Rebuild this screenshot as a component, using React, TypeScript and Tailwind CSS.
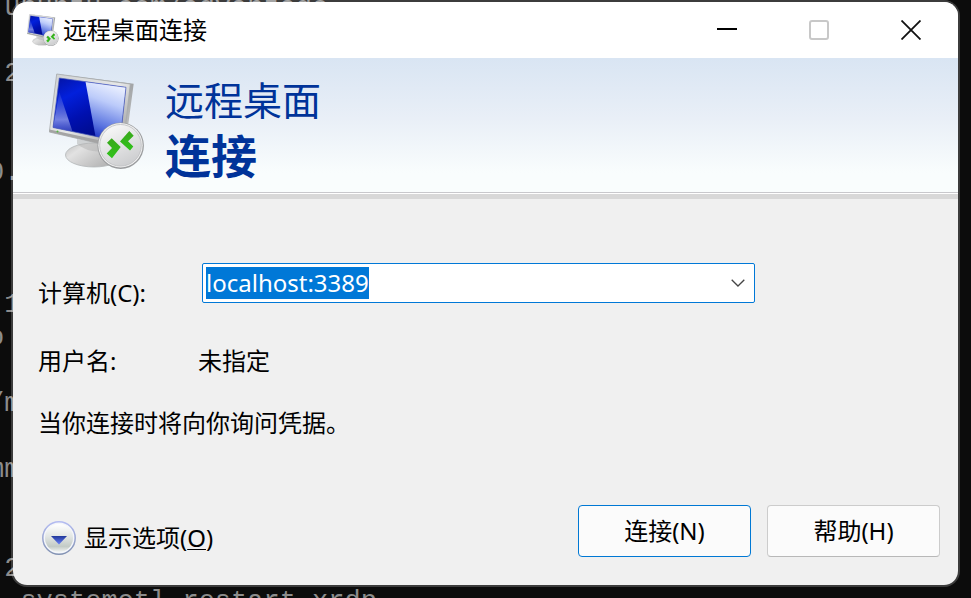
import { useEffect, useId, useRef, useState } from 'react'

const terminalLines = [
  ' ubuntu.com/advantage',
  '',
  ' 2',
  '',
  '',
  '0.',
  '',
  '',
  '',
  ' 1',
  'o',
  '',
  '/m',
  '',
  'mm',
  '',
  '',
  ' 2',
  '  systemctl restart xrdp',
]

function RemoteDesktopIcon({ className }: { className?: string }) {
  const id = useId()
  const ref = (name: string) => `url(#${id}${name})`

  return (
    <svg viewBox="0 0 96 96" className={className} aria-hidden="true">
      <defs>
        <linearGradient id={`${id}frame`} x1="0" y1="0" x2="1" y2="1">
          <stop offset="0" stopColor="#cfd1d2" />
          <stop offset="0.5" stopColor="#e6e7e7" />
          <stop offset="1" stopColor="#8e8e8e" />
        </linearGradient>
        <linearGradient id={`${id}side`} x1="0" y1="0" x2="0" y2="1">
          <stop offset="0" stopColor="#9da0a2" />
          <stop offset="1" stopColor="#c8c8c8" />
        </linearGradient>
        <linearGradient id={`${id}screen`} x1="0" y1="0" x2="0.6" y2="1">
          <stop offset="0" stopColor="#0412a0" />
          <stop offset="0.3" stopColor="#0220dc" />
          <stop offset="0.6" stopColor="#0010b0" />
          <stop offset="1" stopColor="#000a80" />
        </linearGradient>
        <linearGradient id={`${id}glare`} x1="0.65" y1="0" x2="0.4" y2="1">
          <stop offset="0" stopColor="#f0f4ff" />
          <stop offset="0.35" stopColor="#bccbfa" />
          <stop offset="0.75" stopColor="#5a74e0" />
          <stop offset="1" stopColor="#1a30c4" />
        </linearGradient>
        <linearGradient id={`${id}shine`} x1="0" y1="0" x2="0" y2="1">
          <stop offset="0" stopColor="#5b70dd" stopOpacity="0.2" />
          <stop offset="0.7" stopColor="#9aa6ee" stopOpacity="0.75" />
          <stop offset="1" stopColor="#7080dc" stopOpacity="0.45" />
        </linearGradient>
        <linearGradient id={`${id}base`} x1="0" y1="0" x2="1" y2="0.6">
          <stop offset="0" stopColor="#bdbdbd" />
          <stop offset="0.3" stopColor="#e2e2e2" />
          <stop offset="1" stopColor="#b0b0b0" />
        </linearGradient>
        <linearGradient id={`${id}badge`} x1="0.2" y1="0" x2="0.7" y2="1">
          <stop offset="0" stopColor="#fafafa" />
          <stop offset="1" stopColor="#cbccce" />
        </linearGradient>
        <linearGradient id={`${id}green`} x1="0" y1="0" x2="0" y2="1">
          <stop offset="0" stopColor="#3aa81c" />
          <stop offset="1" stopColor="#2fc31a" />
        </linearGradient>
      </defs>
      <ellipse cx="45" cy="82" rx="28.5" ry="12" fill={ref('base')} stroke="#b3b6b8" strokeWidth="0.8" />
      <path d="M28 66 L60 72 L60 77 Q42 82 28 71 Z" fill="#b4b4b4" opacity="0.55" />
      <path d="M7.7 1 L84.7 10.8 L76 76 L73 75.5 L80 12 Z" fill={ref('side')} />
      <path d="M7.7 1 L81.3 11 L74 76 L0.3 59 Z" fill={ref('frame')} stroke="#a6a9ab" strokeWidth="0.8" />
      <path d="M0.6 56.5 L74.3 72.5 L74 76 L0.3 59 Z" fill="#a4a4a4" />
      <path d="M10.3 5 L77 14.3 L71 68.5 L4 54.5 Z" fill={ref('screen')} />
      <path d="M36.5 8.7 L77 14.3 L71 68.5 L46.5 63.4 Z" fill={ref('glare')} />
      <path d="M10.3 19 L23.5 58.5 L4 54.5 Z" fill={ref('shine')} />
      <path d="M10.3 5 L77 14.3 L71 68.5 L4 54.5 Z" fill="none" stroke="#4a5cb8" strokeWidth="0.7" />
      <circle cx="8.5" cy="58.4" r="1" fill="#55bb44" />
      <circle cx="71.7" cy="72.7" r="23.2" fill="#9a9c9e" />
      <circle cx="71.5" cy="72.3" r="22.2" fill="#f0f0f0" />
      <circle cx="71.5" cy="72.3" r="20.8" fill={ref('badge')} stroke="#bcbec0" strokeWidth="0.8" />
      <path d="M62.7 65.3 L71.7 74 L63 85.3 L57.7 80.5 L63 75 L58 69.7 Z" fill={ref('green')} />
      <path d="M80.3 58 L84.7 62.8 L79 68.3 L84.3 73.5 L81 77.5 L71 68.5 Z" fill={ref('green')} />
    </svg>
  )
}

function ExpandIcon({ className }: { className?: string }) {
  const id = useId()

  return (
    <svg viewBox="0 0 34 34" className={className} aria-hidden="true">
      <defs>
        <linearGradient id={`${id}ring`} x1="0" y1="0" x2="0" y2="1">
          <stop offset="0" stopColor="#b4bcf2" />
          <stop offset="1" stopColor="#8292b2" />
        </linearGradient>
        <linearGradient id={`${id}face`} x1="0" y1="0" x2="0" y2="1">
          <stop offset="0" stopColor="#ffffff" />
          <stop offset="0.45" stopColor="#e2e6e4" />
          <stop offset="0.8" stopColor="#c3cbc6" />
          <stop offset="1" stopColor="#f2f5f3" />
        </linearGradient>
        <linearGradient id={`${id}arrow`} x1="0" y1="0" x2="0" y2="1">
          <stop offset="0" stopColor="#20389a" />
          <stop offset="1" stopColor="#6a82fa" />
        </linearGradient>
      </defs>
      <circle cx="17" cy="17" r="16.2" fill="#f4f6fa" stroke={`url(#${id}ring)`} strokeWidth="1.5" />
      <circle cx="17" cy="17" r="14" fill={`url(#${id}face)`} />
      <path d="M9 15 H25 L17 23.5 Z" fill={`url(#${id}arrow)`} />
    </svg>
  )
}

function TitleBar() {
  return (
    <header className="flex h-14 items-stretch bg-white pr-px">
      <div className="flex flex-1 items-center gap-1 pl-3.5">
        <RemoteDesktopIcon className="h-8 w-8" />
        <h1 className="text-2xl">远程桌面连接</h1>
      </div>
      <button aria-label="最小化" className="flex w-[92px] items-center justify-center">
        <svg viewBox="0 0 20 20" className="h-5 w-5">
          <path d="M0 9 H20" stroke="#000" strokeWidth="2" />
        </svg>
      </button>
      <button aria-label="最大化" disabled className="flex w-[92px] items-center justify-center">
        <svg viewBox="0 0 20 20" className="h-5 w-5">
          <rect x="1" y="1" width="18" height="18" rx="2" fill="none" stroke="#c8c8c8" strokeWidth="2" />
        </svg>
      </button>
      <button aria-label="关闭" className="flex w-[92px] items-center justify-center">
        <svg viewBox="0 0 20 20" className="h-5 w-5">
          <path d="M0.5 0.5 L19.5 19.5 M19.5 0.5 L0.5 19.5" stroke="#111" strokeWidth="1.8" />
        </svg>
      </button>
    </header>
  )
}

function Banner() {
  return (
    <div className="border-b-[5px] border-[#d8d8d8]">
      <div className="flex h-[136px] items-start gap-5 border-b border-white bg-linear-to-b from-[#d9e5f3] via-[#e9eff7] via-45% to-[#f9fdfd] to-85% pt-[15px] pl-9 shadow-[inset_0_-1px_0_#c8c8cc]">
        <RemoteDesktopIcon className="h-24 w-24" />
        <div className="text-[#003399]">
          <p className="text-[39px] leading-[54px]">远程桌面</p>
          <p className="text-[46px] leading-[56px] font-bold">连接</p>
        </div>
      </div>
    </div>
  )
}

export default function App() {
  const [computer, setComputer] = useState('localhost:3389')
  const inputRef = useRef<HTMLInputElement>(null)

  useEffect(() => {
    inputRef.current?.focus()
    inputRef.current?.select()
  }, [])

  return (
    <div className="relative flex min-h-screen overflow-hidden bg-[#0c0c0c] px-[11px] pb-[11px] font-['Noto_Sans','Noto_Sans_CJK_SC',sans-serif] text-black">
      <pre
        aria-hidden="true"
        className="absolute inset-0 -top-2 -ml-3 overflow-hidden font-['Liberation_Mono',monospace] text-[27px] leading-[33px] text-[#8c8c8c]"
      >
        {terminalLines.join('\n')}
      </pre>

      <main className="relative flex flex-1 flex-col overflow-hidden rounded-2xl border-2 border-white/20 bg-[#f0f0f0] bg-clip-padding">
        <TitleBar />
        <Banner />

        <form className="flex flex-1 flex-col" onSubmit={(e) => e.preventDefault()}>
          <div className="px-[25px] pt-16 text-2xl leading-8">
            <div className="flex items-start">
              <label htmlFor="computer" className="w-[164px] pt-3.5">
                计算机(C):
              </label>
              <div className="mr-[178px] flex h-10 flex-1 items-center rounded-xs border border-[#0078d7] bg-white pl-[3px]">
                <input
                  id="computer"
                  ref={inputRef}
                  type="text"
                  value={computer}
                  onChange={(e) => setComputer(e.target.value)}
                  className="h-8 min-w-0 flex-1 leading-8 outline-none selection:bg-[#0078d7] selection:text-white"
                />
                <button type="button" aria-label="展开列表" className="flex h-full w-8 items-center justify-center">
                  <svg viewBox="0 0 14 8" className="h-2 w-3.5">
                    <path d="M0.7 0.7 L7 7 L13.3 0.7" fill="none" stroke="#444" strokeWidth="1.3" />
                  </svg>
                </button>
              </div>
            </div>
            <dl className="mt-9 flex">
              <dt className="w-40">用户名:</dt>
              <dd>未指定</dd>
            </dl>
            <p className="mt-[30px]">当你连接时将向你询问凭据。</p>
          </div>

          <div className="mt-auto flex items-center justify-between pr-[18px] pb-7 pl-[29px] text-2xl">
            <button type="button" className="mt-3.5 flex items-center gap-2">
              <ExpandIcon className="h-[34px] w-[34px]" />
              <span>
                显示选项(<u className="decoration-1 underline-offset-2">O</u>)
              </span>
            </button>
            <div className="flex gap-4">
              <button
                type="submit"
                className="h-[52px] w-[173px] rounded border border-[#0078d4] bg-[#fbfbfb]"
              >
                连接(N)
              </button>
              <button
                type="button"
                className="h-[52px] w-[173px] rounded border border-[#cccccc] border-b-[#b8b8b8] bg-[#fbfbfb]"
              >
                帮助(H)
              </button>
            </div>
          </div>
        </form>
      </main>
    </div>
  )
}
